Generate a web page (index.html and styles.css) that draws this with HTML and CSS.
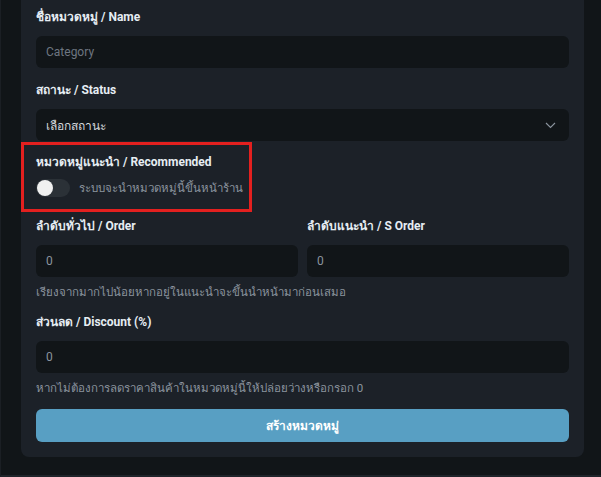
FILE: index.html
```html
<!DOCTYPE html>
<html lang="th">
<head>
  <meta charset="UTF-8" />
  <title>สร้างหมวดหมู่</title>
  <link rel="stylesheet" href="styles.css">
</head>
<body>
  <div class="page">
    <form class="card">
      <div class="field">
        <label class="label">ชื่อหมวดหมู่ / Name</label>
        <input class="input" type="text" placeholder="Category">
      </div>

      <div class="field">
        <label class="label">สถานะ / Status</label>
        <div class="select">
          <span>เลือกสถานะ</span>
          <svg class="chevron" width="11" height="7" viewBox="0 0 11 7">
            <path d="M1 1 L5.5 5.5 L10 1" fill="none" stroke="#8b949e" stroke-width="1.1" />
          </svg>
        </div>
      </div>

      <div class="field recommended">
        <label class="label">หมวดหมู่แนะนำ / Recommended</label>
        <div class="switch-row">
          <span class="switch"><span class="knob"></span></span>
          <span class="switch-text">ระบบจะนำหมวดหมู่นี้ขึ้นหน้าร้าน</span>
        </div>
      </div>

      <div class="field">
        <div class="row">
          <div>
            <label class="label">ลำดับทั่วไป / Order</label>
            <input class="input value" type="text" value="0">
          </div>
          <div>
            <label class="label">ลำดับแนะนำ / S Order</label>
            <input class="input value" type="text" value="0">
          </div>
        </div>
        <div class="help">เรียงจากมากไปน้อยหากอยู่ในแนะนำจะขึ้นนำหน้ามาก่อนเสมอ</div>
      </div>

      <div class="field">
        <label class="label">ส่วนลด / Discount (%)</label>
        <input class="input value" type="text" value="0">
        <div class="help">หากไม่ต้องการลดราคาสินค้าในหมวดหมู่นี้ให้ปล่อยว่างหรือกรอก 0</div>
      </div>

      <button class="submit" type="button">สร้างหมวดหมู่</button>
    </form>
  </div>
</body>
</html>
```

FILE: styles.css
```css
body {
  margin: 0;
  background: #111518;
  font-family: 'Roboto', 'Noto Sans', sans-serif;
  color: #e6edf3;
}

.page {
  border-left: 1px solid #1b1f24;
  border-bottom: 2px solid #1f242a;
  padding: 0 17px 18px 20px;
  height: 457px;
}

.card {
  background: #1c2128;
  border-radius: 0 0 8px 8px;
  padding: 8px 15px 15px;
}

.field {
  margin-bottom: 13px;
}

.label {
  display: block;
  font-size: 12px;
  font-weight: 700;
  line-height: 18px;
  margin-bottom: 10px;
  color: #e6edf3;
}

.input,
.select {
  display: flex;
  align-items: center;
  box-sizing: border-box;
  width: 100%;
  height: 32px;
  background: #111518;
  border: 0;
  border-radius: 6px;
  padding: 0 10px;
  font-family: inherit;
  font-size: 12px;
  color: #8b949e;
  outline: none;
}

.input::placeholder {
  color: #6e7681;
}

.select {
  justify-content: space-between;
  color: #d4d8dd;
  padding-right: 13px;
}

.recommended {
  width: fit-content;
  margin: -12px 0 5px -15px;
  padding: 8px 6px 12px 12px;
  border: 3px solid #e3201f;
}

.recommended .label {
  margin-bottom: 8px;
}

.switch-row {
  display: flex;
  align-items: center;
  gap: 9px;
  height: 18px;
}

.switch {
  display: flex;
  align-items: center;
  width: 34px;
  height: 18px;
  border-radius: 9px;
  background: #2b3137;
}

.knob {
  width: 16px;
  height: 16px;
  margin-left: 1px;
  border-radius: 50%;
  background: #f0f0f0;
}

.switch-text {
  font-size: 11.5px;
  color: #8b949e;
}

.row {
  display: grid;
  grid-template-columns: 1fr 1fr;
  gap: 9px;
}

.help {
  margin-top: 7px;
  font-size: 11.5px;
  line-height: 16px;
  color: #8b949e;
}

.submit {
  display: block;
  width: 100%;
  height: 33px;
  margin-top: 13px;
  border: 0;
  border-radius: 6px;
  background: #589fc3;
  color: #ffffff;
  font-family: inherit;
  font-size: 12px;
  font-weight: 700;
}
```
